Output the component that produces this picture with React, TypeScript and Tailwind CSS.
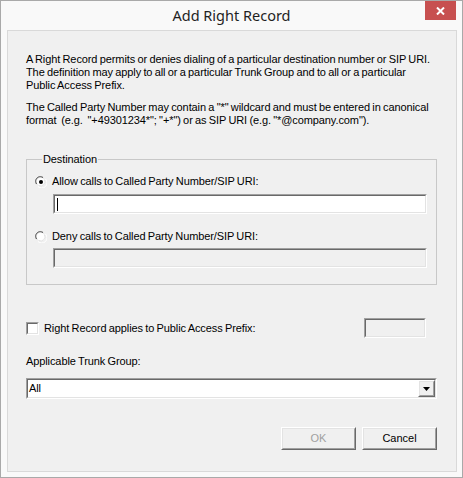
import React from "react";

const body = { fontFamily: '"Liberation Sans", Arial, sans-serif' } as const;

function Sunken({ className, children }: { className: string; children?: React.ReactNode }) {
  return (
    <div className={`border border-t-[#a0a0a0] border-l-[#a0a0a0] border-b-white border-r-white ${className}`}>
      <div className="flex h-full w-full border border-t-[#696969] border-l-[#696969] border-b-[#e3e3e3] border-r-[#e3e3e3]">
        {children}
      </div>
    </div>
  );
}

function Raised({ className, children }: { className: string; children?: React.ReactNode }) {
  return (
    <div className={`border border-t-white border-l-white border-b-[#696969] border-r-[#696969] ${className}`}>
      <div className="flex h-full w-full items-center justify-center border border-t-[#e3e3e3] border-l-[#e3e3e3] border-b-[#a0a0a0] border-r-[#a0a0a0] bg-[#f0f0f0]">
        {children}
      </div>
    </div>
  );
}

function Radio({ checked }: { checked?: boolean }) {
  return (
    <svg width="12" height="12" viewBox="0 0 12 12" className="shrink-0">
      <path d="M1 8 A5.2 5.2 0 0 1 8 1" fill="none" stroke="#a0a0a0" strokeWidth="1" />
      <path d="M2 8.2 A4.2 4.2 0 0 1 8.2 2" fill="none" stroke="#696969" strokeWidth="1" />
      <circle cx="6" cy="6" r="4" fill="#ffffff" />
      <path d="M3 10.5 A5.2 5.2 0 0 0 10.5 3" fill="none" stroke="#ffffff" strokeWidth="1" />
      <path d="M3.5 9.3 A4.2 4.2 0 0 0 9.3 3.5" fill="none" stroke="#e3e3e3" strokeWidth="1" />
      {checked && <circle cx="6" cy="6" r="2" fill="#000000" />}
    </svg>
  );
}

export default function App() {
  return (
    <div className="h-[478px] w-[463px] border border-[#a9a9a9] bg-[#f9f9f9]" style={body}>
      <div className="relative flex h-[29px] items-center justify-center">
        <span
          className="text-[14.5px] leading-none text-[#1f1f1f] mt-[-1px]"
          style={{ fontFamily: '"Noto Sans", "Open Sans", sans-serif' }}
        >
          Add Right Record
        </span>
        <div className="absolute left-[424px] top-0 flex h-[19px] w-[31px] items-center justify-center bg-[#c75050]">
          <svg width="9" height="8" viewBox="0 0 9 8">
            <path d="M1 0.5 L8 7.5 M8 0.5 L1 7.5" stroke="#ffffff" strokeWidth="2" />
          </svg>
        </div>
      </div>
      <div className="ml-[6px] h-[442px] w-[450px] border border-[#d9d9d9] bg-[#f0f0f0] pl-[18px] pt-[22px] text-[11px] leading-[13px] tracking-[-0.1px] [word-spacing:-0.6px] whitespace-nowrap text-black">
        <div className="w-[411px]">
          <p>
            A Right Record permits or denies dialing of a particular destination number or SIP URI.
            <br />
            The definition may apply to all or a particular Trunk Group and to all or a particular
            <br />
            Public Access Prefix.
          </p>
          <p className="mt-[9px]">
            The Called Party Number may contain a "*" wildcard and must be entered in canonical
            <br />
            format&nbsp; (e.g.&nbsp; "+49301234*"; "+*") or as SIP URI (e.g. "*@company.com").
          </p>

          <fieldset className="mt-[26px] w-[411px] border border-[#c8c8c8] pb-[16px] pl-[8px] pt-[9px]">
            <legend className="ml-[7px] px-[1px]">Destination</legend>
            <div className="flex h-[13px] items-center gap-[5px]">
              <Radio checked />
              <span>Allow calls to Called Party Number/SIP URI:</span>
            </div>
            <Sunken className="ml-[18px] mt-[6px] h-[20px] w-[374px] bg-white">
              <div className="ml-[2px] mt-[2px] h-[13px] w-px bg-black" />
            </Sunken>
            <div className="mt-[16px] flex h-[13px] items-center gap-[5px]">
              <Radio />
              <span>Deny calls to Called Party Number/SIP URI:</span>
            </div>
            <Sunken className="ml-[18px] mt-[5px] h-[20px] w-[374px] bg-[#f0f0f0]" />
          </fieldset>

          <div className="mt-[33px] flex h-[20px] w-[400px] items-center justify-between">
            <div className="flex items-center gap-[5px]">
              <Sunken className="h-[13px] w-[13px] bg-white" />
              <span>Right Record applies to Public Access Prefix:</span>
            </div>
            <Sunken className="h-[20px] w-[62px] bg-[#f0f0f0]" />
          </div>

          <div className="mt-[17px] h-[13px]">Applicable Trunk Group:</div>

          <Sunken className="mt-[10px] h-[21px] w-[411px] bg-white">
            <div className="flex flex-1 items-center pl-[1px]">All</div>
            <Raised className="h-[17px] w-[17px]">
              <svg width="7" height="4" viewBox="0 0 7 4">
                <path d="M0 0 H7 L3.5 4 Z" fill="#000000" />
              </svg>
            </Raised>
          </Sunken>

          <div className="mt-[28px] flex justify-end gap-[6px] tracking-normal [word-spacing:normal]">
            <Raised className="h-[23px] w-[75px]">
              <span className="text-[#a0a0a0]">OK</span>
            </Raised>
            <Raised className="h-[23px] w-[75px]">
              <span>Cancel</span>
            </Raised>
          </div>
        </div>
      </div>
    </div>
  );
}
